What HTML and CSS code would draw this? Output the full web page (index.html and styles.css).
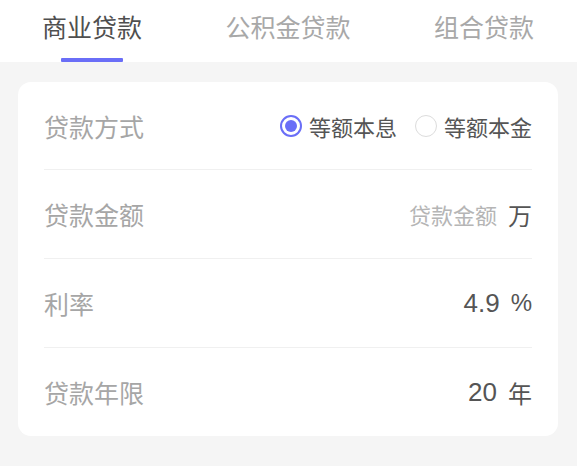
FILE: index.html
```html
<!DOCTYPE html>
<html lang="zh-CN">
<head>
<meta charset="utf-8">
<title>贷款计算</title>
<link rel="stylesheet" href="styles.css">
</head>
<body>
<div class="page">
  <nav class="tabs">
    <div class="tab active">商业贷款</div>
    <div class="tab">公积金贷款</div>
    <div class="tab">组合贷款</div>
  </nav>
  <main class="content">
    <section class="card">
      <div class="row">
        <span class="label">贷款方式</span>
        <div class="options">
          <label class="option"><span class="radio checked"></span><span>等额本息</span></label>
          <label class="option"><span class="radio"></span><span>等额本金</span></label>
        </div>
      </div>
      <div class="row">
        <span class="label">贷款金额</span>
        <div class="value-wrap">
          <span class="placeholder">贷款金额</span>
          <span class="unit">万</span>
        </div>
      </div>
      <div class="row">
        <span class="label">利率</span>
        <div class="value-wrap">
          <span class="value">4.9</span>
          <span class="unit">%</span>
        </div>
      </div>
      <div class="row">
        <span class="label">贷款年限</span>
        <div class="value-wrap">
          <span class="value">20</span>
          <span class="unit">年</span>
        </div>
      </div>
    </section>
  </main>
</div>
</body>
</html>
```

FILE: styles.css
```css
* { box-sizing: border-box; }
html, body {
  margin: 0;
  padding: 0;
  height: 100%;
}
body {
  font-family: "Liberation Sans", "Noto Sans CJK SC", sans-serif;
  background: #f5f5f5;
  color: #555;
}
.page {
  width: 577px;
  min-height: 466px;
  background: #f5f5f5;
}
.tabs {
  height: 62px;
  background: #fff;
  display: flex;
  justify-content: space-between;
  align-items: stretch;
  padding: 0 43px 0 42px;
}
.tab {
  position: relative;
  font-size: 25px;
  line-height: 25px;
  color: #a8a8a8;
  padding-top: 16px;
}
.tab.active {
  color: #4f4f4f;
}
.tab.active::after {
  content: "";
  position: absolute;
  left: 50%;
  bottom: 0;
  width: 62px;
  height: 4px;
  margin-left: -31px;
  background: #6a6ef7;
  border-radius: 1px;
}
.content {
  padding: 20px 19px 29px 18px;
}
.card {
  background: #fff;
  border-radius: 13px;
  padding: 0 26px;
}
.row {
  height: 89px;
  display: flex;
  align-items: center;
  justify-content: space-between;
  border-bottom: 1px solid #f0f0f0;
}
.row:first-child { height: 88px; }
.row:last-child {
  border-bottom: none;
  height: 88px;
}
.label {
  font-size: 25px;
  color: #a6a6a6;
}
.options {
  display: flex;
  align-items: center;
  gap: 18px;
}
.option {
  display: flex;
  align-items: center;
  gap: 7px;
  font-size: 22px;
  color: #555;
}
.radio {
  width: 22px;
  height: 22px;
  border-radius: 50%;
  border: 1.5px solid #dcdcdc;
  display: flex;
  align-items: center;
  justify-content: center;
}
.radio.checked {
  border: 2px solid #6a6ef7;
}
.radio.checked::after {
  content: "";
  width: 12px;
  height: 12px;
  border-radius: 50%;
  background: #6a6ef7;
}
.value-wrap {
  display: flex;
  align-items: center;
}
.placeholder {
  font-size: 22px;
  color: #b5b5b5;
}
.value {
  font-size: 26px;
  color: #555;
}
.unit {
  font-size: 24px;
  color: #555;
  margin-left: 11px;
}
```
